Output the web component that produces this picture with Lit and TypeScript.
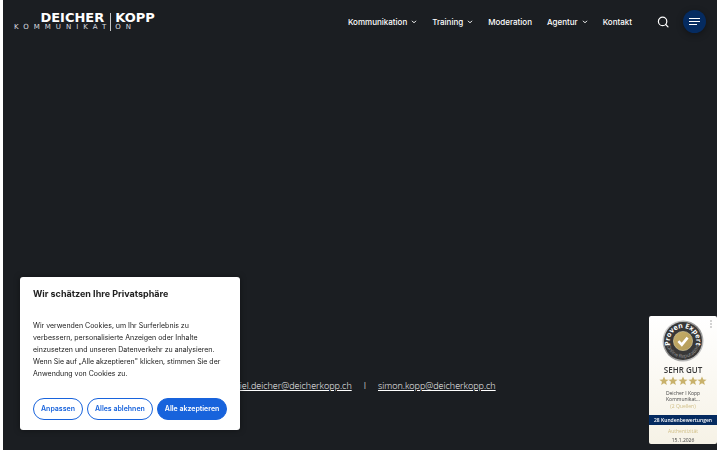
import { LitElement, html, css, svg } from "lit";
import { customElement } from "lit/decorators.js";

const chevron = html`<svg class="chevron" viewBox="0 0 6 4" aria-hidden="true"><path d="M1 .8 3 2.8 5 .8" fill="none" stroke="currentColor" stroke-width="1"/></svg>`;

@customElement("site-header")
class SiteHeader extends LitElement {
  static styles = css`
    :host { display: flex; justify-content: space-between; align-items: center; height: 43px; padding: 0 11px; color: #fff; }
    .logo { color: #fff; text-decoration: none; display: grid; grid-template-columns: auto auto; column-gap: 2px; }
    .col { display: flex; flex-direction: column; align-items: flex-end; }
    .end { align-items: flex-start; border-left: 1px solid #c4c6c8; padding-left: 4px; }
    .name { font: bold 13px/10px "DejaVu Sans", sans-serif; }
    .start .name { padding-right: 4px; }
    .sub { font: 7px/8px "DejaVu Sans", sans-serif; letter-spacing: 5px; color: #dcdee0; margin-right: -5px; }
    .start .sub { margin-right: -3px; }
    nav { display: flex; align-items: center; gap: 15px; font: 500 8px/12px Inter, sans-serif; }
    nav a { color: #fff; text-decoration: none; display: flex; align-items: center; gap: 4px; }
    .chevron { width: 6px; height: 4px; }
    button { border: 0; padding: 0; background: none; color: #fff; display: grid; place-items: center; }
    .search { margin-left: 10px; width: 12px; height: 12px; }
    .search svg { width: 12px; height: 12px; }
    .menu { width: 23px; height: 23px; border-radius: 50%; background: #052b60; box-shadow: 0 2px 7px #0005; margin-left: -1px; }
    .menu svg { width: 11px; height: 7px; }
  `;
  render() {
    return html`
      <a class="logo" href="#" aria-label="Deicher Kopp Kommunikation">
        <span class="col start"><span class="name">DEICHER</span><span class="sub">KOMMUNIKAT</span></span>
        <span class="col end"><span class="name">KOPP</span><span class="sub">ON</span></span>
      </a>
      <nav>
        <a href="#">Kommunikation ${chevron}</a>
        <a href="#">Training ${chevron}</a>
        <a href="#">Moderation</a>
        <a href="#">Agentur ${chevron}</a>
        <a href="#">Kontakt</a>
        <button class="search" aria-label="Suche"><svg viewBox="0 0 12 12" fill="none" stroke="#fff" stroke-width="1.2" stroke-linecap="round"><circle cx="5.6" cy="5.4" r="4.2"/><path d="m8.7 8.5 2.3 2.3"/></svg></button>
        <button class="menu" aria-label="Menü"><svg viewBox="0 0 11 7" fill="none" stroke="#fff" stroke-width="1"><path d="M0 .5h11M0 3.5h11M0 6.5h8"/></svg></button>
      </nav>`;
  }
}

@customElement("cookie-banner")
class CookieBanner extends LitElement {
  static styles = css`
    :host { display: block; box-sizing: border-box; width: 220px; padding: 10px 13px; background: #fff; border-radius: 3px; color: #212121; font: 7px/12px Inter, sans-serif; box-shadow: 0 0 6px #0006; }
    h2 { margin: 0 0 20px; font-size: 9px; line-height: 13px; font-weight: 700; }
    p { margin: 0 0 18px; }
    .actions { display: flex; gap: 4px; }
    button { box-sizing: border-box; height: 22px; padding: 0 7px; border: 1px solid #1863dc; border-radius: 11px; background: #fff; color: #1863dc; font: 600 7px/12px Inter, sans-serif; white-space: nowrap; flex: auto; }
    .primary { background: #1863dc; color: #fff; }
  `;
  render() {
    return html`
      <h2>Wir schätzen Ihre Privatsphäre</h2>
      <p>Wir verwenden Cookies, um Ihr Surferlebnis zu verbessern, personalisierte Anzeigen oder Inhalte einzusetzen und unseren Datenverkehr zu analysieren. Wenn Sie auf „Alle akzeptieren" klicken, stimmen Sie der Anwendung von Cookies zu.</p>
      <div class="actions"><button>Anpassen</button><button>Alles ablehnen</button><button class="primary">Alle akzeptieren</button></div>`;
  }
}

@customElement("rating-badge")
class RatingBadge extends LitElement {
  static styles = css`
    :host { display: flex; flex-direction: column; align-items: stretch; width: 68px; background: linear-gradient(#fff, #f6f2e6); border-radius: 2px; overflow: hidden; text-align: center; color: #444; font: 5px/6px "Open Sans", sans-serif; position: relative; }
    .seal { width: 42px; height: 42px; margin: 4px auto 3px; }
    .more { position: absolute; right: 5px; top: 4px; width: 2px; height: 8px; }
    .grade { font-size: 8px; line-height: 10px; font-weight: 600; color: #3a3a3a; }
    .stars { width: 48px; height: 10px; margin: 1px auto 4px; }
    .quiet { color: #cfbd83; }
    .sources { margin-top: 1px; }
    .count { margin: 6px 0 3px; background: #052b60; color: #fff; line-height: 10px; font-weight: 600; }
    .date { margin: 3px 0 1px; }
  `;
  render() {
    const star = (x: number) => svg`<path transform="translate(${x} 5)" d="M0-4.6 1.3-1.5 4.6-1.3 2 .8 2.9 4.1 0 2.3-2.9 4.1-2 .8-4.6-1.3-1.3-1.5Z"/>`;
    return html`
      <svg class="more" viewBox="0 0 2 8" fill="#888"><circle cx="1" cy="1" r=".7"/><circle cx="1" cy="4" r=".7"/><circle cx="1" cy="7" r=".7"/></svg>
      <svg class="seal" viewBox="0 0 42 42">
        <defs>
          <linearGradient id="ring" x2="1" y2="1"><stop stop-color="#eee"/><stop offset=".5" stop-color="#888"/><stop offset="1" stop-color="#ddd"/></linearGradient>
          <linearGradient id="gold" x2="1" y2="1"><stop stop-color="#c5ae69"/><stop offset="1" stop-color="#b39a58"/></linearGradient>
          <path id="top" d="M8.2 24.4a13.2 13.2 0 1 1 25.6 0"/>
          <path id="bottom" d="M4.2 21a16.8 16.8 0 0 0 33.6 0"/>
        </defs>
        <circle cx="21" cy="21" r="20.5" fill="url(#ring)"/>
        <circle cx="21" cy="21" r="19" fill="#383838"/>
        <circle cx="21" cy="21" r="9.6" fill="url(#gold)" stroke="#ded1a8" stroke-width=".6"/>
        <path d="m16.4 21.2 3.4 3.5 5.8-7" fill="none" stroke="#fff" stroke-width="2.6"/>
        <text fill="#fff" font-family="Open Sans, sans-serif" font-size="7" font-weight="700" text-anchor="middle"><textPath href="#top" startOffset="50%">Proven Expert</textPath></text>
        <text fill="#999" font-family="Open Sans, sans-serif" font-size="5" text-anchor="middle"><textPath href="#bottom" startOffset="50%">Online Reputation</textPath></text>
      </svg>
      <div class="grade">SEHR GUT</div>
      <svg class="stars" viewBox="0 0 48 10" fill="#c9b26c">${[5, 14, 24, 34, 43].map(star)}</svg>
      <div>Deicher I Kopp<br>Kommunikat...</div>
      <div class="quiet sources">(2 Quellen)</div>
      <div class="count">28 Kundenbewertungen</div>
      <div class="quiet">Authentizität</div>
      <div class="date">15.1.2026</div>`;
  }
}

@customElement("app-root")
class AppRoot extends LitElement {
  static styles = css`
    :host { display: block; background: #fff; padding: 0 3px; }
    .page { min-height: 100vh; background: #1b1e22; display: flex; flex-direction: column; }
    main { flex: 1; display: flex; align-items: flex-end; justify-content: center; }
    .contacts { display: flex; gap: 12px; padding-bottom: 58px; font: 300 9px/12px "Open Sans", sans-serif; color: #fff; }
    .contacts a { color: #fff; text-underline-offset: 1px; text-decoration-thickness: 1px; }
    .cookies { position: fixed; left: 20px; bottom: 20px; }
    .badge { position: fixed; right: 3px; bottom: 6px; }
  `;
  render() {
    return html`
      <div class="page">
        <site-header></site-header>
        <main><div class="contacts"><a href="mailto:daniel.deicher@deicherkopp.ch">daniel.deicher@deicherkopp.ch</a><span>I</span><a href="mailto:simon.kopp@deicherkopp.ch">simon.kopp@deicherkopp.ch</a></div></main>
      </div>
      <cookie-banner class="cookies"></cookie-banner>
      <rating-badge class="badge"></rating-badge>`;
  }
}
